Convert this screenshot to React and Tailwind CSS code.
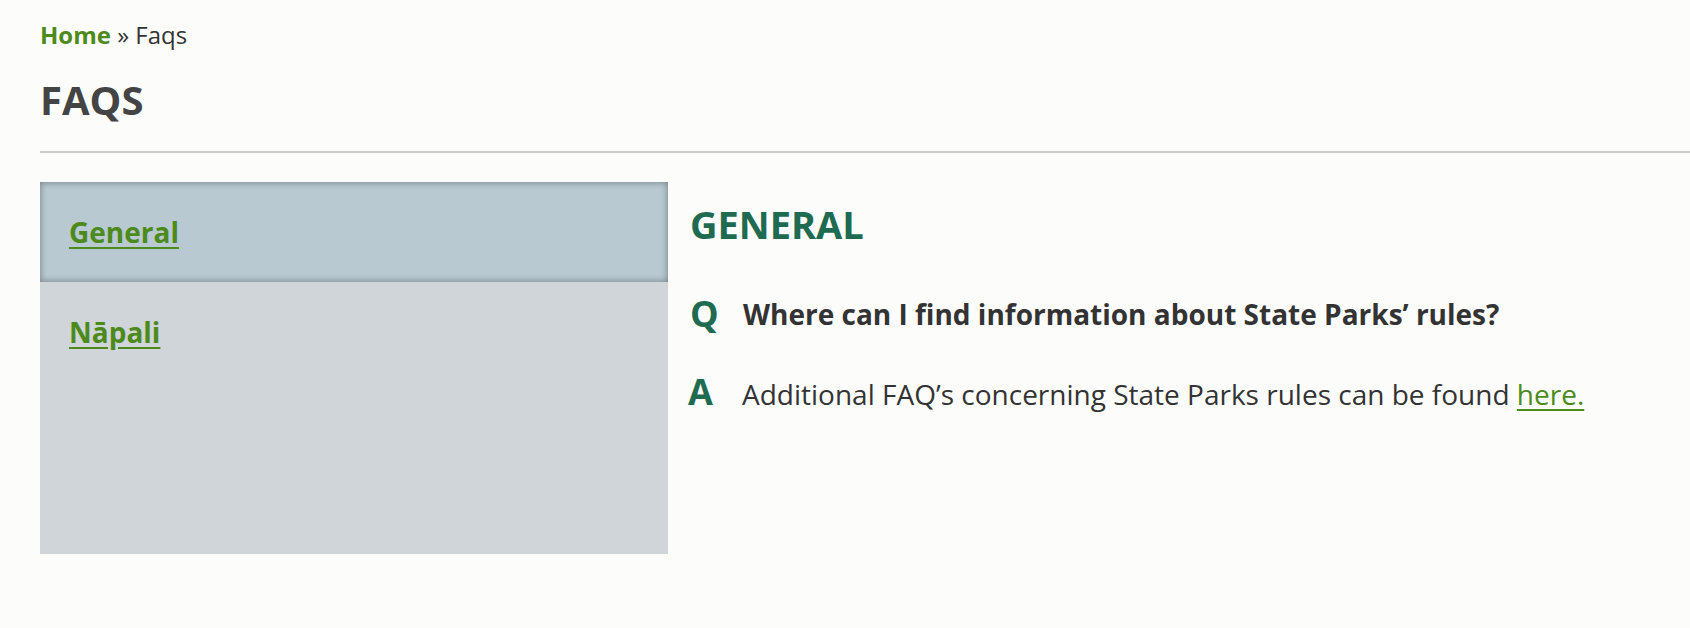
const font = { fontFamily: '"Open Sans", "Liberation Sans", sans-serif' };

const topics = [
  { id: "general", label: "General", active: true },
  { id: "napali", label: "Nāpali", active: false },
];

export default function App() {
  return (
    <div style={font} className="min-h-screen bg-[#fcfcfb] pl-10 pt-5 text-[#333]">
      <nav className="text-[24px] leading-[30px]">
        <a href="#" className="font-bold text-[#4d8a1c]">
          Home
        </a>{" "}
        » Faqs
      </nav>

      <h1 className="mt-[26px] text-[40px] font-bold leading-[48px] text-[#444]">FAQS</h1>

      <hr className="mt-[27px] border-0 border-t-2 border-[#cccccc]" />

      <div className="mt-[29px] flex">
        <ul className="h-[372px] w-[628px] shrink-0 bg-[#cfd5d8]">
          {topics.map((topic) => (
            <li
              key={topic.id}
              className={`h-[100px] pl-[29px] ${
                topic.active ? "bg-[#b8c9d1] shadow-[inset_0_0_7px_rgba(0,0,0,0.4)]" : ""
              }`}
            >
              <a
                href="#"
                className="text-[28px] font-bold leading-[100px] text-[#4d8a1c] underline underline-offset-[4px]"
              >
                {topic.label}
              </a>
            </li>
          ))}
        </ul>

        <div className="ml-[22px] pt-[20px]">
          <h2 className="text-[38px] font-bold leading-[44px] text-[#1e6b52]">GENERAL</h2>

          <div className="mt-[48px] flex items-start">
            <span className="w-[53px] shrink-0 text-[36px] font-bold leading-[40px] text-[#1e6b52]">Q</span>
            <p className="text-[28px] font-bold leading-[40px] text-[#333]">
              Where can I find information about State Parks’ rules?
            </p>
          </div>

          <div className="mt-[38px] flex items-baseline">
            <span className="-ml-[2px] w-[54px] shrink-0 text-[36px] font-bold leading-[40px] text-[#1e6b52]">A</span>
            <p className="text-[28px] leading-[40px] text-[#333]">
              Additional FAQ’s concerning State Parks rules can be found{" "}
              <a href="#" className="text-[#4d8a1c] underline underline-offset-[4px]">
                here.
              </a>
            </p>
          </div>
        </div>
      </div>
    </div>
  );
}
